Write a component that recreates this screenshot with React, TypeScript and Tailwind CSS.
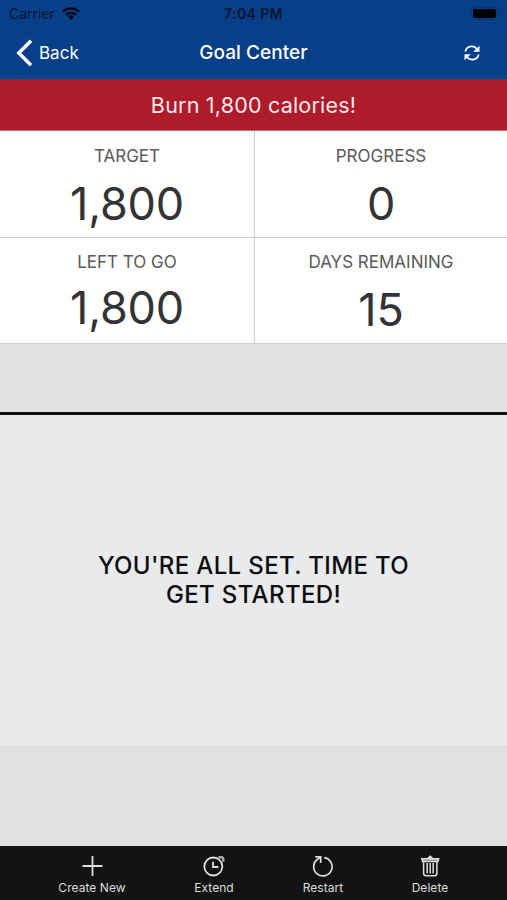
import React from 'react';

const stats = [
  { label: 'TARGET', value: '1,800', cell: 'border-r border-b pt-[15px]', gap: 'mt-[20px]' },
  { label: 'PROGRESS', value: '0', cell: 'border-b pt-[15px]', gap: 'mt-[20px]' },
  { label: 'LEFT TO GO', value: '1,800', cell: 'border-r pt-[14px]', gap: 'mt-[18px]' },
  { label: 'DAYS REMAINING', value: '15', cell: 'pt-[14px]', gap: 'mt-[20px]' },
];

const PlusIcon = () => (
  <svg className="size-[22px]" viewBox="0 0 22 22" fill="none" stroke="currentColor" strokeWidth="1.8">
    <path d="M11.5 1v20M1.5 11h20" />
  </svg>
);

const ExtendIcon = () => (
  <svg className="size-[22px]" viewBox="0 0 22 22" fill="none" stroke="currentColor" strokeWidth="1.8">
    <circle cx="10.3" cy="11.5" r="9" />
    <path d="M10 6.8V12h5.4" />
    <path d="M15.5 2.2h2.6q2.2 0 2.2 2.2v2.4" strokeWidth="2.4" strokeOpacity="0.75" />
  </svg>
);

const RestartIcon = () => (
  <svg className="size-[22px]" viewBox="0 0 22 22" fill="none" stroke="currentColor" strokeWidth="1.7">
    <path d="M12.2 2.6A9.2 9.2 0 1 1 5 4.6L8.3 2.6" />
    <path d="M3.3 1.9h5.4v6" />
  </svg>
);

const DeleteIcon = () => (
  <svg className="size-[22px]" viewBox="0 0 22 22" fill="none" stroke="currentColor" strokeWidth="1.5">
    <path d="M2.8 3.8h16.9l-.8 2.7H3.6z" fill="currentColor" fillOpacity="0.6" />
    <path d="M8.8 3.5l2.4-2.2 2.4 2.2" fill="currentColor" />
    <path d="M4.6 6.8V18q0 2.8 2.5 2.8h8.3q2.5 0 2.5-2.8V6.8" />
    <path d="M8.2 8v10.5M11.2 8v10.5M14.2 8v10.5" />
  </svg>
);

const tabs = [
  { label: 'Create New', icon: <PlusIcon />, width: 'w-[124px]' },
  { label: 'Extend', icon: <ExtendIcon />, width: 'w-[120px]' },
  { label: 'Restart', icon: <RestartIcon />, width: 'w-[98px]' },
  { label: 'Delete', icon: <DeleteIcon />, width: 'w-[116px]' },
];

const StatusBar = () => (
  <div className="grid h-[26px] grid-cols-3 items-center text-[14px] text-[#03152f]">
    <div className="flex items-center gap-[7px] pl-[9px]">
      <span>Carrier</span>
      <svg className="h-[13px] w-[18px]" viewBox="0 0 18 13" fill="none" stroke="#000814" strokeWidth="2.3">
        <path d="M1 4.7a11.5 11.5 0 0 1 16 0" />
        <path d="M3.9 8a7.4 7.4 0 0 1 10.2 0" />
        <path d="M9 13l-3-3.2a4.3 4.3 0 0 1 6 0z" fill="#000814" stroke="none" />
      </svg>
    </div>
    <span className="text-center font-semibold tracking-[0.4px]">7:04 PM</span>
    <div className="flex items-center justify-end gap-[1px] pr-[7px]">
      <div className="h-[13px] w-[27px] rounded-[4px] border border-[#073574] p-[1px]">
        <div className="h-full rounded-[2px] bg-black" />
      </div>
      <div className="h-[4px] w-[1px] rounded-r bg-[#073574]" />
    </div>
  </div>
);

const NavBar = () => (
  <div className="grid h-[53px] grid-cols-3 items-center pt-[2px] text-white">
    <button className="flex items-center gap-[7px] pl-[16px] text-[17px]">
      <svg className="-mt-[2px] h-[28px] w-[16px]" viewBox="0 0 16 28" fill="none" stroke="currentColor" strokeWidth="3.4">
        <path d="M15 1.8L2.8 14 15 26.2" />
      </svg>
      <span>Back</span>
    </button>
    <h1 className="text-center text-[19px] font-medium tracking-[0.05px] whitespace-nowrap">Goal Center</h1>
    <button className="-mt-[2px] flex justify-end pr-[27px]">
      <svg className="size-[16px]" viewBox="0 0 16 16" fill="none" stroke="currentColor" strokeWidth="1.6">
        <path d="M1.3 6.5C2.2 1.5 8.8-.5 12.8 3.6M14.7 9.5C13.8 14.5 7.2 16.5 3.2 12.4" />
        <path d="M15.5.7v6H9.2zM.5 15.3v-6h6.3z" fill="currentColor" stroke="none" />
      </svg>
    </button>
  </div>
);

const App: React.FC = () => {
  return (
    <div className="flex h-[900px] w-full flex-col overflow-hidden bg-[#e0e1e2] font-['Inter',sans-serif]">
      <header className="h-[79px] shrink-0 bg-[#083f89]">
        <StatusBar />
        <NavBar />
      </header>

      <div className="flex h-[52px] shrink-0 items-center justify-center border-b border-[#c9727d] bg-[#ae1b2b] pt-[2px] text-[21.5px] tracking-[0.2px] text-[#fbe9e8]">
        <span>Burn 1,800 calories!</span>
      </div>

      {/* Goal numbers */}
      <section className="grid h-[213px] shrink-0 grid-cols-[255px_1fr] grid-rows-[107px_106px] border-b border-[#cfd0d0] bg-white">
        {stats.map((stat) => (
          <div key={stat.label} className={`flex flex-col items-center border-[#cfcfcf] ${stat.cell}`}>
            <span className="text-[17px] leading-[20px] text-[#58595a]">{stat.label}</span>
            <span className={`text-[45px] leading-[36px] tracking-[-0.2px] text-[#323334] ${stat.gap}`}>{stat.value}</span>
          </div>
        ))}
      </section>

      <div className="h-[68px] shrink-0" />

      <main className="flex h-[333px] shrink-0 items-center justify-center border-t-[3px] border-[#111213] bg-[#e9eaeb]">
        <p className="text-center text-[24px] leading-[29px] font-medium tracking-[0.35px] text-[#0c0d0e]">
          YOU'RE ALL SET. TIME TO
          <br />
          GET STARTED!
        </p>
      </main>

      <div className="flex-1" />

      <nav className="flex h-[54px] shrink-0 bg-[#121312] pl-[30px] text-[#dededc]">
        {tabs.map((tab) => (
          <button key={tab.label} className={`flex flex-col items-center pt-[9px] ${tab.width}`}>
            {tab.icon}
            <span className="mt-[3px] text-[12px] leading-[15px] tracking-[0.05px]">{tab.label}</span>
          </button>
        ))}
      </nav>
    </div>
  );
};

export default App;
